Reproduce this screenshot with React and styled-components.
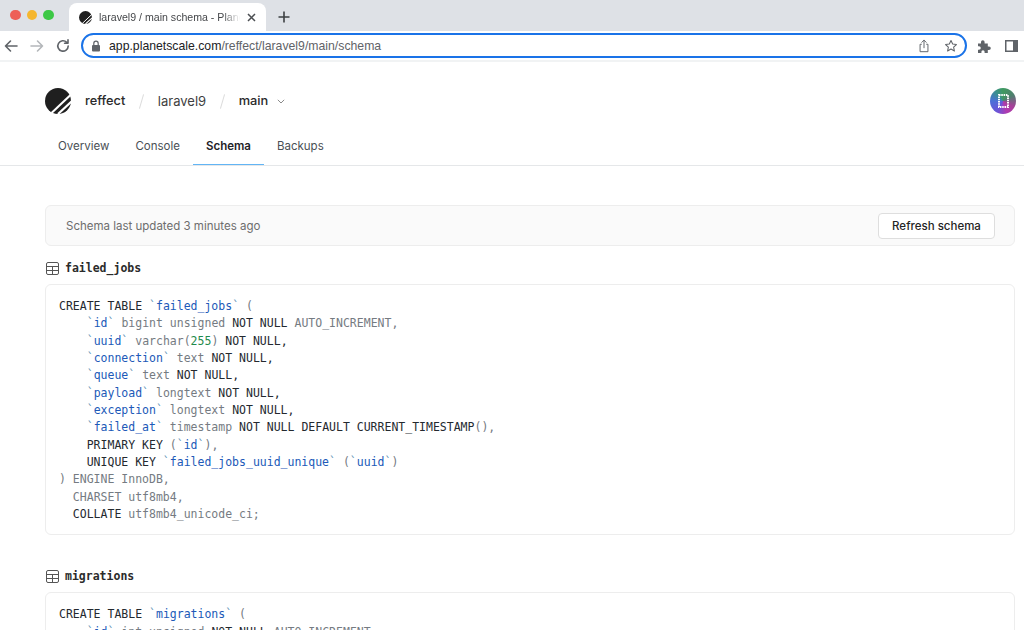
import React from "react";
import styled, { createGlobalStyle } from "styled-components";

const Global = createGlobalStyle`
  html, body { margin: 0; padding: 0; height: 630px; overflow: hidden; background: #fff; }
  * { box-sizing: border-box; }
  body { font-family: Inter, "Liberation Sans", sans-serif; }
`;
const Page = styled.div`width: 1024px; height: 630px; overflow: hidden; display: flex; flex-direction: column;`;

const TabStrip = styled.div`height: 31px; background: #dee1e6; display: flex; align-items: flex-end; flex: none;`;
const Lights = styled.div`width: 69px; height: 31px; padding: 9.5px 0 0 10px; display: flex; gap: 6px; flex: none;`;
const Light = styled.span`width: 10.5px; height: 10.5px; border-radius: 50%; background: ${p => p.$c};`;
const Tab = styled.div`
  width: 197px; height: 28px; background: #fff; border-radius: 8px 8px 0 0;
  display: flex; align-items: center; padding: 0 10px; gap: 7px; flex: none;
`;
const TabTitle = styled.span`
  flex: 1; font: 10.6px/14px "Liberation Sans", sans-serif; color: #45474a; white-space: nowrap; overflow: hidden;
  -webkit-mask-image: linear-gradient(to right, #000 88%, transparent 100%);
  mask-image: linear-gradient(to right, #000 88%, transparent 100%);
`;
const NewTab = styled.div`width: 36px; height: 28px; display: flex; align-items: center; justify-content: center;`;

const Toolbar = styled.div`
  height: 31px; background: #fff; border-bottom: 2px solid #f1f3f4; flex: none;
  display: flex; align-items: center;
`;
const NavIcons = styled.div`width: 81px; display: flex; align-items: center; gap: 10px; padding-left: 3px; flex: none;`;
const Address = styled.div`
  width: 886px; height: 25px; border: 2px solid #1a73e8; border-radius: 13px; display: flex; align-items: center;
  padding: 0 7px 0 8px; flex: none;
`;
const Url = styled.div`flex: 1; margin-left: 8px; font: 12.25px/16px "Liberation Sans", sans-serif; color: #5f6368; white-space: nowrap;`;
const Host = styled.span`color: #202124;`;
const AddrIcons = styled.div`display: flex; align-items: center; gap: 13px;`;
const ExtIcons = styled.div`display: flex; align-items: center; gap: 14px; margin-left: 10px;`;

const Header = styled.header`height: 104px; border-bottom: 1px solid #e5e7e9; padding: 0 8px 0 45px; display: flex; flex-direction: column; flex: none;`;
const TopRow = styled.div`height: 66px; padding-top: 13px; display: flex; align-items: center;`;
const Crumb = styled.span`font-size: ${p => p.$muted ? 13 : 12.8}px; line-height: 16px; color: ${p => p.$muted ? "#3f3f3f" : "#2a2a2a"}; font-weight: ${p => p.$muted ? 400 : 500};`;
const Slash = styled.span`width: 1px; height: 15px; background: #dcdcdc; transform: rotate(16deg); margin: 0 15.5px 0 16px;`;
const Brand = styled.div`display: flex; align-items: center; flex: 1;`;
const LogoWrap = styled.div`margin-right: 14px; display: flex; width: 26px; height: 26px;`;
const Avatar = styled.div`
  width: 26px; height: 26px; border-radius: 50%;
  background: conic-gradient(from 0deg, #3f9a5f, #4f7f6f 60deg, #a8409a 120deg, #b03ab0 160deg, #6a55d8 210deg, #4a70d8 270deg, #3a8f90 320deg, #3f9a5f);
  display: flex; align-items: center; justify-content: center;
`;
const Tabs = styled.nav`height: 37px; display: flex; margin-top: 1px;`;
const NavTab = styled.div`
  height: 37px; padding: 8px 13px 0 13px; font-size: 11.5px; line-height: 20px;
  color: ${p => p.$active ? "#1f2328" : "#4a4f55"}; font-weight: ${p => p.$active ? 600 : 400};
  border-bottom: 1px solid ${p => p.$active ? "#62b5f5" : "transparent"};
`;

const Main = styled.main`padding: 39px 9px 0 45px; display: flex; flex-direction: column;`;
const Banner = styled.div`
  height: 41px; background: #fafafa; border: 1px solid #ededed; border-radius: 6px;
  display: flex; align-items: center; justify-content: space-between; padding: 0 19px 0 20px;
`;
const BannerText = styled.span`font-size: 11.5px; color: #6d6d6d;`;
const Button = styled.button`
  width: 117px; height: 26px; border: 1px solid #dedede; border-radius: 4px; background: #fff;
  font: 500 11.5px/16px Inter, sans-serif; color: #242424; padding: 0;
`;
const TableHead = styled.div`height: 16px; display: flex; align-items: center; gap: 6px; margin-top: ${p => p.$top}px; padding-left: 1px;`;
const TableName = styled.span`font: 700 11.5px/16px "DejaVu Sans Mono", monospace; color: #2b2b2b;`;
const CodeCard = styled.pre`
  margin: 8px 0 0; padding: 13px 13px 11px; background: #fff; border: 1px solid #ededed; border-radius: 6px;
  font: 11.5px/17.33px "DejaVu Sans Mono", monospace; color: #24292f; flex: none;
`;
const G = styled.span`color: #757b82;`;
const B = styled.span`color: #2059b8;`;
const Q = styled.span`color: #5d93b5;`;
const N = styled.span`color: #1f8a4c;`;

const Tick = ({ children }) => <><Q>`</Q><B>{children}</B><Q>`</Q></>;

const Logo = ({ size = 26 }) => (
  <svg width={size} height={size} viewBox="0 0 26 26">
    <circle cx="13" cy="13" r="13" fill="#1f1f1f" />
    <path d="M6.5 25L26 6.5" stroke="#fff" strokeWidth="2" />
    <path d="M13 26L27 13" stroke="#fff" strokeWidth="2.2" />
  </svg>
);
const TableIcon = () => (
  <svg width="13" height="13" viewBox="0 0 13 13" fill="none" stroke="#555" strokeWidth="1">
    <rect x=".5" y=".5" width="12" height="12" rx="1.5" />
    <path d="M.5 4.5h12M.5 8.5h12M6.5 4.5v8" />
  </svg>
);
const Ico = ({ d, c = "#5f6368", w = 1.6, s = 16 }) => (
  <svg width={s} height={s} viewBox="0 0 16 16" fill="none" stroke={c} strokeWidth={w} strokeLinecap="round" strokeLinejoin="round"><path d={d} /></svg>
);

export default function App() {
  return (
    <Page>
      <Global />
      <TabStrip>
        <Lights>
          <Light $c="#ed5f57" /><Light $c="#f5b62f" /><Light $c="#3cc845" />
        </Lights>
        <Tab>
          <Logo size={13} />
          <TabTitle>laravel9 / main schema - PlanetScale</TabTitle>
          <svg width="9" height="9" viewBox="0 0 9 9" stroke="#4b4e52" strokeWidth="1.5"><path d="M1 1l7 7M8 1L1 8" /></svg>
        </Tab>
        <NewTab>
          <svg width="12" height="12" viewBox="0 0 12 12" stroke="#3c4043" strokeWidth="1.6"><path d="M6 .5v11M.5 6h11" /></svg>
        </NewTab>
      </TabStrip>
      <Toolbar>
        <NavIcons>
          <Ico d="M14 8H2.5M7.5 3l-5 5 5 5" c="#5f6368" />
          <Ico d="M2 8h11.5M8.5 3l5 5-5 5" c="#b4b7ba" />
          <Ico d="M13.2 8a5.2 5.2 0 1 1-1.5-3.7M13 1.8v3.4H9.6" c="#5f6368" />
        </NavIcons>
        <Address>
          <svg width="10" height="12" viewBox="0 0 10 12"><rect x="1" y="5" width="8" height="6.5" rx="1" fill="#5f6368" /><path d="M2.8 5V3.4a2.2 2.2 0 0 1 4.4 0V5" fill="none" stroke="#5f6368" strokeWidth="1.2" /></svg>
          <Url><Host>app.planetscale.com</Host>/reffect/laravel9/main/schema</Url>
          <AddrIcons>
            <Ico s={14} w={1.1} d="M8 10V1.5M5.5 3.8L8 1.3l2.5 2.5M5 6H3.5v8.5h9V6H11" />
            <Ico s={14} w={1.2} d="M8 1.8l1.9 4 4.3.5-3.2 3 .9 4.4L8 11.5l-3.9 2.2.9-4.4-3.2-3 4.3-.5z" />
          </AddrIcons>
        </Address>
        <ExtIcons>
          <svg width="14" height="14" viewBox="0 0 14 14" fill="#5f6368"><path d="M1 4.5h3V3a1.8 1.8 0 0 1 3.6 0v1.5h3.2v3h1.2a1.8 1.8 0 0 1 0 3.6h-1.2V14H7.6v-1.2a1.6 1.6 0 0 0-3.2 0V14H1v-3.2h1a1.8 1.8 0 0 0 0-3.6H1z" /></svg>
          <svg width="13" height="12" viewBox="0 0 13 12"><rect x=".75" y=".75" width="11.5" height="10.5" fill="none" stroke="#5f6368" strokeWidth="1.5" /><rect x="8" y="1" width="4" height="10" fill="#5f6368" /></svg>
        </ExtIcons>
      </Toolbar>
      <Header>
        <TopRow>
          <Brand>
            <LogoWrap><Logo /></LogoWrap>
            <Crumb>reffect</Crumb>
            <Slash />
            <Crumb $muted>laravel9</Crumb>
            <Slash />
            <Crumb>main</Crumb>
            <svg style={{ marginLeft: 9 }} width="8" height="5" viewBox="0 0 8 5" fill="none" stroke="#8a8a8a" strokeWidth="1"><path d="M.8.8L4 4l3.2-3.2" /></svg>
          </Brand>
          <Avatar>
            <svg width="11" height="14" viewBox="0 0 11 14"><rect x="1" y="1" width="9" height="12" fill="none" stroke="#fff" strokeWidth="2" strokeDasharray="1.5 .8" /></svg>
          </Avatar>
        </TopRow>
        <Tabs>
          <NavTab>Overview</NavTab>
          <NavTab>Console</NavTab>
          <NavTab $active>Schema</NavTab>
          <NavTab>Backups</NavTab>
        </Tabs>
      </Header>
      <Main>
        <Banner>
          <BannerText>Schema last updated 3 minutes ago</BannerText>
          <Button>Refresh schema</Button>
        </Banner>
        <TableHead $top={14}><TableIcon /><TableName>failed_jobs</TableName></TableHead>
        <CodeCard>{`CREATE TABLE `}<Tick>failed_jobs</Tick>{` `}<G>(</G>{`
    `}<Tick>id</Tick> <G>bigint unsigned</G> NOT NULL <G>AUTO_INCREMENT,</G>{`
    `}<Tick>uuid</Tick> <G>varchar(</G><N>255</N><G>)</G> NOT NULL,{`
    `}<Tick>connection</Tick> <G>text</G> NOT NULL,{`
    `}<Tick>queue</Tick> <G>text</G> NOT NULL,{`
    `}<Tick>payload</Tick> <G>longtext</G> NOT NULL,{`
    `}<Tick>exception</Tick> <G>longtext</G> NOT NULL,{`
    `}<Tick>failed_at</Tick> <G>timestamp</G> NOT NULL DEFAULT CURRENT_TIMESTAMP<G>(),</G>{`
    PRIMARY KEY `}<G>(</G><Tick>id</Tick><G>),</G>{`
    UNIQUE KEY `}<Tick>failed_jobs_uuid_unique</Tick> <G>(</G><Tick>uuid</Tick><G>)</G>{`
`}<G>) ENGINE InnoDB,</G>{`
  `}<G>CHARSET utf8mb4,</G>{`
  COLLATE `}<G>utf8mb4_unicode_ci;</G></CodeCard>
        <TableHead $top={33}><TableIcon /><TableName>migrations</TableName></TableHead>
        <CodeCard>{`CREATE TABLE `}<Tick>migrations</Tick>{` `}<G>(</G>{`
    `}<Tick>id</Tick> <G>int unsigned</G> NOT NULL <G>AUTO_INCREMENT,</G>{`
    `}<Tick>migration</Tick> <G>varchar(</G><N>255</N><G>)</G> NOT NULL,</CodeCard>
      </Main>
    </Page>
  );
}
